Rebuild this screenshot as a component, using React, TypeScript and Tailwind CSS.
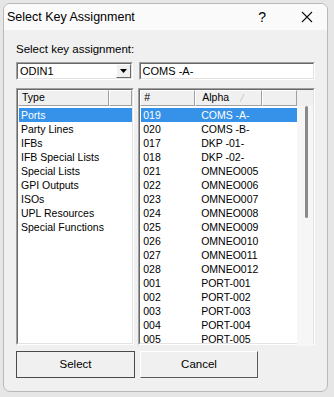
const types = [
  "Ports",
  "Party Lines",
  "IFBs",
  "IFB Special Lists",
  "Special Lists",
  "GPI Outputs",
  "ISOs",
  "UPL Resources",
  "Special Functions",
];

const ports = [
  ["019", "COMS -A-"],
  ["020", "COMS -B-"],
  ["017", "DKP -01-"],
  ["018", "DKP -02-"],
  ["021", "OMNEO005"],
  ["022", "OMNEO006"],
  ["023", "OMNEO007"],
  ["024", "OMNEO008"],
  ["025", "OMNEO009"],
  ["026", "OMNEO010"],
  ["027", "OMNEO011"],
  ["028", "OMNEO012"],
  ["001", "PORT-001"],
  ["002", "PORT-002"],
  ["003", "PORT-003"],
  ["004", "PORT-004"],
  ["005", "PORT-005"],
];

// sunken 3d frame like a classic win32 control
const sunken =
  "border border-t-[#a0a0a0] border-l-[#a0a0a0] border-b-white border-r-white";
const sunkenInner =
  "border border-t-[#696969] border-l-[#696969] border-b-[#e3e3e3] border-r-[#e3e3e3]";
const headCell =
  "h-full border-r border-b border-r-[#a0a0a0] border-b-[#a0a0a0] border-t border-l border-t-white border-l-white bg-[#f0f0f0] flex items-center";

export default function App() {
  return (
    <div className="w-[334px] h-[397px] bg-[#e6e6e6] overflow-hidden font-['Liberation_Sans',Arial,sans-serif] text-black">
      <div className="ml-[3px] mt-[3px] w-[325px] h-[389px] rounded-[7px] border border-[#b9b9b9] bg-[#f0f0f0] overflow-hidden flex flex-col">
        {/* title bar */}
        <div className="h-[26px] bg-[#fafafa] flex items-center pl-[3px]">
          <span className="text-[12.5px] leading-none">Select Key Assignment</span>
          <span className="ml-auto mr-[35px] text-[14px] leading-none">?</span>
          <svg width="12" height="12" viewBox="0 0 12 12" className="mr-[14px]">
            <path d="M1 1L11 11M11 1L1 11" stroke="#111" strokeWidth="1.1" />
          </svg>
        </div>

        {/* body */}
        <div className="flex-1 flex flex-col px-[12px] pt-[11px] pb-[13px]">
          <div className="text-[11.5px] leading-[16px]">Select key assignment:</div>

          <div className="flex mt-[5px] h-[18px]">
            <div className={`w-[117px] h-full ${sunken}`}>
              <div className={`h-full bg-white flex items-center ${sunkenInner}`}>
                <span className="pl-[2px] text-[11px] leading-none flex-1">ODIN1</span>
                <div className="w-[15px] h-full bg-[#f0f0f0] border border-t-white border-l-white border-b-[#696969] border-r-[#696969] flex items-center justify-center">
                  <svg width="7" height="4" viewBox="0 0 7 4">
                    <path d="M0 0H7L3.5 4Z" fill="#000" />
                  </svg>
                </div>
              </div>
            </div>
            <div className={`ml-[6px] w-[177px] h-full ${sunken}`}>
              <div className={`h-full bg-white flex items-center ${sunkenInner}`}>
                <span className="pl-[2px] text-[11px] leading-none">COMS -A-</span>
              </div>
            </div>
          </div>

          <div className="flex mt-[8px] h-[257px] text-[10.5px]">
            {/* type list */}
            <div className={`w-[119px] h-full ${sunken}`}>
              <div className={`h-full bg-white flex flex-col ${sunkenInner}`}>
                <div className="flex h-[16px] shrink-0">
                  <div className={`w-[91px] pl-[3px] ${headCell}`}>Type</div>
                  <div className={`flex-1 ${headCell}`} />
                </div>
                <div className="pt-[2px] pl-[1px]">
                  {types.map((t, i) => (
                    <div
                      key={t}
                      className={`h-[14px] pl-[2px] leading-[14px] ${
                        i === 0 ? "bg-[#3592e8] text-white" : ""
                      }`}
                    >
                      {t}
                    </div>
                  ))}
                </div>
              </div>
            </div>

            {/* port list */}
            <div className={`ml-[4px] w-[178px] h-full ${sunken}`}>
              <div className={`h-full bg-white flex flex-col ${sunkenInner}`}>
                <div className="flex h-[16px] shrink-0">
                  <div className={`w-[55px] pl-[3px] ${headCell}`}>#</div>
                  <div className={`w-[67px] pl-[6px] relative ${headCell}`}>
                    Alpha
                    <svg width="8" height="8" viewBox="0 0 8 8" className="absolute right-[14px] top-[3px]">
                      <path d="M1 8L5 0" stroke="#c8c8c8" strokeWidth="1" />
                    </svg>
                  </div>
                  <div className={`w-[35px] ${headCell}`} />
                  <div className="flex-1 bg-[#f0f0f0]" />
                </div>
                <div className="flex flex-1">
                  <div className="pt-[2px] pl-[1px] w-[157px]">
                    {ports.map(([n, a], i) => (
                      <div
                        key={n}
                        className={`h-[14px] flex leading-[14px] ${
                          i === 0 ? "bg-[#3592e8] text-white" : ""
                        }`}
                      >
                        <span className="w-[60px] pl-[2px]">{n}</span>
                        <span>{a}</span>
                      </div>
                    ))}
                  </div>
                  <div className="flex-1 bg-[#f6f6f6] pl-[8px]">
                    <div className="w-[3px] h-[112px] bg-[#8a8a8a] rounded-full" />
                  </div>
                </div>
              </div>
            </div>
          </div>

          <div className="flex mt-[6px] h-[27px] text-[11.5px]">
            <button className="w-[119px] h-full bg-[#f0f0f0] border border-[#4a4a4a] flex items-center justify-center">
              Select
            </button>
            <button className="ml-[5px] w-[118px] h-full bg-[#f0f0f0] border border-t-white border-l-white border-b-[#5a5a5a] border-r-[#5a5a5a] flex items-center justify-center">
              Cancel
            </button>
          </div>
        </div>
      </div>
    </div>
  );
}
